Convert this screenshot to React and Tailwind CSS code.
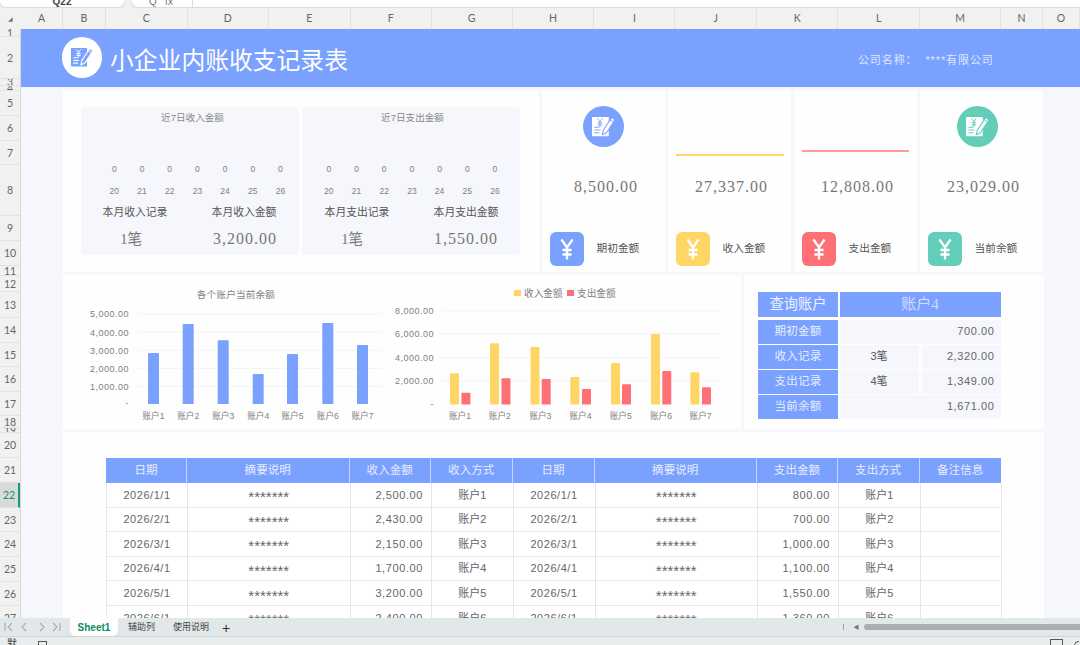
const COLS = [["A",42],["B",43],["C",82],["D",81],["E",82],["F",81],["G",81],["H",82],["I",81],["J",82],["K",81],["L",82],["M",81],["N",42],["O",37]];
const ROWS = [[1,8],[2,42],[3,7],[4,5],[5,25],[6,25],[7,24],[8,51],[9,25],[10,25],[11,10],[12,16],[13,26],[14,25],[15,24],[16,25],[17,24],[18,12],[19,5],[20,25],[21,25],[22,24.5],[23,24.5],[24,25],[25,24.5],[26,24.5],[27,24]];
const ENTRIES = [
  ["2026/1/1","2,500.00","账户1","800.00"],
  ["2026/2/1","2,430.00","账户2","700.00"],
  ["2026/3/1","2,150.00","账户3","1,000.00"],
  ["2026/4/1","1,700.00","账户4","1,100.00"],
  ["2026/5/1","3,200.00","账户5","1,550.00"],
  ["2026/6/1","2,400.00","账户6","1,360.00"],
];
const HEAD = ["日期","摘要说明","收入金额","收入方式","日期","摘要说明","支出金额","支出方式","备注信息"];
const CHART1 = [[147,353],[181.7,324],[216.7,340.3],[251.7,374],[286,354],[321.3,323],[356,345]];
const CHART2 = [[449,373.3,460.4,392.7],[489,343.3,500.5,378.3],[529.5,347,540.7,379],[569.3,377,581,389],[610,363,621,384.3],[650,334,661.3,371],[689.4,372.3,701,387.3]];
const LABEL2 = [459,498.8,539.4,579.5,619.7,660,699.6];

function NoteIcon({ fg, bg, size = 26 }) {
  return (
    <svg width={size} height={size * 0.84} viewBox="0 0 25 21" fill="none">
      <path d="M1.6 1h15.6a.6.6 0 0 1 .6.6v18a.6.6 0 0 1-.6.6H1.6a.6.6 0 0 1-.6-.6v-18a.6.6 0 0 1 .6-.6z" fill={fg} />
      <path d="M6.5 2.5l2.4 3 2.4-3M8.9 5.5v5.5M6.6 6.7h4.6M6.6 8.8h4.6" stroke={bg} strokeWidth="1" />
      <path d="M3.4 11.2h5M3.4 14h6M3.4 16.8h5" stroke={bg} strokeWidth="1.1" />
      <path d="M11.3 18.8l1-4.6L20.6 1.6l3.4 2.2-8.3 12.7z" fill={fg} stroke={bg} strokeWidth="1.1" strokeLinejoin="round" />
      <path d="M19.2 3.8l3.4 2.2" stroke={bg} strokeWidth="1" />
    </svg>
  );
}

function YenIcon() {
  return (
    <svg width="14" height="22" viewBox="0 0 14 22" fill="none" stroke="white" strokeWidth="2.3">
      <path d="M1.5 1.5L7 9.5l5.5-8M7 9.5V21.5M2.5 12h9M2.5 16.5h9" />
    </svg>
  );
}

const serif = "font-['Liberation_Serif','Noto_Sans_CJK_SC',serif]";

function MiniPanel({ title, a, b, c, pad, cols, titlePad, countPad, valuePad }) {
  return (
    <div className="w-[218px] h-[148px] shrink-0 bg-[#f5f7fc] rounded-sm flex flex-col">
      <div className={`mt-[5px] h-3 leading-3 text-center text-[9.6px] text-[#888888] ${titlePad}`}>{title}</div>
      <div className={`mt-[39px] h-3 leading-3 grid grid-cols-[repeat(7,27.7px)] text-center text-[8.5px] text-[#808080] ${pad}`}>
        {[0,0,0,0,0,0,0].map((v, i) => <span key={i}>{v}</span>)}
      </div>
      <div className={`mt-[10px] h-3 leading-3 grid grid-cols-[repeat(7,27.7px)] text-center text-[8.5px] text-[#808080] ${pad}`}>
        {[20,21,22,23,24,25,26].map((v) => <span key={v}>{v}</span>)}
      </div>
      <div className={`mt-[8px] h-[14px] leading-[14px] grid text-center text-[10.8px] text-[#555555] ${cols}`}>
        <span>{a}</span><span>{b}</span>
      </div>
      <div className={`mt-[10px] h-5 leading-5 grid text-center text-[#777777] ${cols} ${serif}`}>
        <span className={`text-[14.5px] ${countPad}`}>1笔</span>
        <span className={`text-[16px] tracking-[1px] ${valuePad}`}>{c}</span>
      </div>
    </div>
  );
}

function Card({ top, value, color, label, pad }) {
  return (
    <div className="w-[123px] shrink-0 bg-[#fefefe] flex flex-col">
      <div className="h-[74px]">{top}</div>
      <div className={`h-[46px] leading-[46px] text-center text-[16px] tracking-[1px] text-[#777777] ${pad} ${serif}`}>{value}</div>
      <div className="mt-[22px] pl-[7.5px] flex items-center gap-[13px]">
        <div className={`w-[34px] h-[34px] rounded-md flex items-center justify-center ${color}`}><YenIcon /></div>
        <span className="text-[10.7px] text-[#555555] -mt-[2px]">{label}</span>
      </div>
    </div>
  );
}

function Circle({ color, fg, ml = "ml-[41px]" }) {
  return (
    <div className={`mt-[16px] ${ml} w-[41px] h-[41px] rounded-full flex items-center justify-center ${color}`}>
      <NoteIcon fg="#ffffff" bg={fg} size={25} />
    </div>
  );
}

const axisStyle = { fontSize: 9, fill: "#808080", letterSpacing: 0.5 };
const catStyle = { fontSize: 8.6, fill: "#808080", textAnchor: "middle" };

function Chart1() {
  const ticks = [["5,000.00",314],["4,000.00",332.3],["3,000.00",350.3],["2,000.00",368.3],["1,000.00",386.3]];
  return (
    <svg className="shrink-0" width="328" height="154" viewBox="62 275 328 154">
      <text x="235" y="297.5" textAnchor="middle" style={{ fontSize: 9.6, fill: "#808080", letterSpacing: 0.2 }}>各个账户当前余额</text>
      {ticks.map(([t, y]) => (
        <g key={t}>
          <line x1="137" x2="381" y1={y} y2={y} stroke="#f3f3f3" />
          <text x="128" y={y + 3.2} textAnchor="end" style={axisStyle}>{t}</text>
        </g>
      ))}
      <text x="128" y="406" textAnchor="end" style={axisStyle}>-</text>
      {CHART1.map(([x, top], i) => (
        <g key={i}>
          <path d={`M${x} 404V${top + 1}a1 1 0 0 1 1-1h9a1 1 0 0 1 1 1V404z`} fill="#7ba1ff" />
          <text x={x + 5.5} y="419" style={catStyle}>账户{i + 1}</text>
        </g>
      ))}
    </svg>
  );
}

function Chart2() {
  const ticks = [["8,000.00",310.7],["6,000.00",333.7],["4,000.00",357.7],["2,000.00",381]];
  return (
    <svg className="shrink-0" width="350" height="154" viewBox="390 275 350 154">
      <rect x="513" y="290" width="7" height="6" fill="#ffd666" />
      <text x="523" y="296.5" style={{ fontSize: 9.7, fill: "#808080" }}>收入金额</text>
      <rect x="566" y="290" width="7" height="6" fill="#ff7076" />
      <text x="576" y="296.5" style={{ fontSize: 9.7, fill: "#808080" }}>支出金额</text>
      {ticks.map(([t, y]) => (
        <g key={t}>
          <line x1="440" x2="721" y1={y} y2={y} stroke="#f3f3f3" />
          <text x="433" y={y + 3.2} textAnchor="end" style={axisStyle}>{t}</text>
        </g>
      ))}
      <text x="433" y="406.5" textAnchor="end" style={axisStyle}>-</text>
      {CHART2.map(([x1, t1, x2, t2], i) => (
        <g key={i}>
          <path d={`M${x1} 404.5V${t1 + 1}a1 1 0 0 1 1-1h7a1 1 0 0 1 1 1V404.5z`} fill="#ffd666" />
          <path d={`M${x2} 404.5V${t2 + 1}a1 1 0 0 1 1-1h7a1 1 0 0 1 1 1V404.5z`} fill="#ff7076" />
          <text x={LABEL2[i]} y="419" style={catStyle}>账户{i + 1}</text>
        </g>
      ))}
    </svg>
  );
}

function QueryRow({ label, children, h = "h-[24px]" }) {
  return (
    <div className={`flex gap-[1.5px] ${h}`}>
      <div className="w-[80px] bg-[#7ba1ff] flex items-center justify-center text-[11.5px] tracking-[0.3px] text-[#e7edff]">{label}</div>
      {children}
    </div>
  );
}

const num = "text-[11px] tracking-[0.6px] text-[#666666]";

function QueryPanel() {
  return (
    <div className="w-[300px] shrink-0 bg-[#fefefe] pt-[17px] pl-[14px] flex flex-col gap-[1px]">
      <div className="flex gap-[1.5px] h-[25px] mb-[1.5px]">
        <div className="w-[80px] bg-[#7ba1ff] flex items-center justify-center text-[14.3px] text-[#eef2ff]">查询账户</div>
        <div className={`w-[161px] bg-[#7ba1ff] flex items-center justify-center text-[15px] text-[#cfdcff] ${serif}`}>账户4</div>
      </div>
      <QueryRow label="期初金额">
        <div className={`w-[161px] bg-[#f5f7fc] pr-[6px] flex items-center justify-end ${num}`}>700.00</div>
      </QueryRow>
      <QueryRow label="收入记录">
        <div className="w-[79px] bg-[#f5f7fc] flex items-center justify-center text-[11px] text-[#555555]">3笔</div>
        <div className={`w-[79px] ml-[1.5px] bg-[#f5f7fc] pr-[6px] flex items-center justify-end ${num}`}>2,320.00</div>
      </QueryRow>
      <QueryRow label="支出记录">
        <div className="w-[79px] bg-[#f5f7fc] flex items-center justify-center text-[11px] text-[#555555]">4笔</div>
        <div className={`w-[79px] ml-[1.5px] bg-[#f5f7fc] pr-[6px] flex items-center justify-end ${num}`}>1,349.00</div>
      </QueryRow>
      <QueryRow label="当前余额">
        <div className={`w-[161px] bg-[#f5f7fc] pr-[6px] flex items-center justify-end ${num}`}>1,671.00</div>
      </QueryRow>
    </div>
  );
}

const tableCols = "grid grid-cols-[81px_162.5px_81.5px_81.5px_82px_162.5px_81px_81.5px_81.5px]";

function EntryTable() {
  return (
    <div className="w-[895px]">
      <div className={`${tableCols} h-[25px] bg-[#7ba1ff]`}>
        {HEAD.map((h, i) => (
          <div key={i} className={`flex items-center justify-center text-[11.5px] tracking-[0.1px] text-[#e7edff] ${i < 8 ? "border-r border-[#c4d4ff]" : ""}`}>{h}</div>
        ))}
      </div>
      {ENTRIES.map((r, i) => {
        const cell = "flex items-center border-r border-[#e6e6e6] text-[#666666]";
        const center = `${cell} justify-center`;
        const date = `${center} text-[11px] tracking-[0.55px]`;
        const stars = `${center} text-[15px] leading-none pt-[4px] text-[#555555]`;
        const amount = `${cell} justify-end pr-[8px] text-[11px] tracking-[0.6px]`;
        const acct = `${center} text-[11px]`;
        return (
          <div key={i} className={`${tableCols} h-[24.6px] border-b border-[#e6e6e6] border-l bg-white`}>
            <div className={date}>{r[0]}</div>
            <div className={stars}>*******</div>
            <div className={amount}>{r[1]}</div>
            <div className={acct}>{r[2]}</div>
            <div className={date}>{r[0]}</div>
            <div className={stars}>*******</div>
            <div className={amount}>{r[3]}</div>
            <div className={acct}>{r[2]}</div>
            <div className={cell}></div>
          </div>
        );
      })}
    </div>
  );
}

export default function App() {
  return (
    <div className="w-[1080px] h-[645px] overflow-hidden flex flex-col bg-[#f1f1ef] font-['Liberation_Sans','Noto_Sans_CJK_SC',sans-serif]">
      {/* formula bar */}
      <div className="h-[8px] shrink-0 flex gap-[8px] overflow-hidden">
        <div className="w-[124px] h-[7px] bg-white rounded-b-md shadow-sm flex items-end justify-center overflow-hidden">
          <span className="text-[10px] leading-[10px] text-[#444444] font-bold">Q22</span>
        </div>
        <div className="flex-1 h-[7px] bg-white rounded-bl-md shadow-sm flex items-end pl-[17px] overflow-hidden">
          <span className="text-[10px] leading-[10px] text-[#777777] w-[43px]">Q&nbsp;&nbsp;&nbsp;fx</span>
          <span className="w-px h-full bg-[#dddddd]"></span>
        </div>
      </div>
      {/* column headings */}
      <div className="h-[21px] shrink-0 flex bg-[#f1f1ef] font-['Lato',sans-serif] text-[10.5px] text-[#666666]">
        <div className="w-[21px] flex items-center justify-center text-[6px] text-[#777777]">◢</div>
        {COLS.map(([c, w]) => (
          <div key={c} style={{ width: w }} className="flex items-center justify-center border-r border-[#e2e2e0]">{c}</div>
        ))}
      </div>
      {/* sheet */}
      <div className="flex-1 min-h-0 flex overflow-hidden">
        <div className="w-[21px] shrink-0 border-r border-[#d9d9d9] font-['Lato',sans-serif] text-[10.5px] text-[#666666]">
          {ROWS.map(([n, h]) => (
            <div key={n} style={{ height: h, lineHeight: `${h}px` }} className={`overflow-hidden text-center border-b border-[#e2e2e0] ${n === 22 ? "bg-[#d9dbda] text-[#1a8f6c] border-r-2 border-r-[#1a9b75]" : ""}`}>{n}</div>
          ))}
        </div>
        <div className="flex-1 min-w-0 bg-[#f5f7fd] flex flex-col overflow-hidden">
          {/* title band */}
          <div className="h-[58px] shrink-0 bg-[#7ba1ff] flex items-center pl-[41px]">
            <div className="w-[40px] h-[41px] -mt-[2px] rounded-full bg-white flex items-center justify-center">
              <NoteIcon fg="#7ba1ff" bg="#ffffff" size={24} />
            </div>
            <span className="ml-[8px] mt-[5px] text-[23.8px] text-white">小企业内账收支记录表</span>
            <span className="ml-[510px] mt-[4px] text-[11px] tracking-[0.9px] text-[#dfe8ff]">公司名称：&nbsp;&nbsp;****有限公司</span>
          </div>
          {/* top row */}
          <div className="mt-[3px] h-[182px] shrink-0 flex pl-[42px] gap-[3px]">
            <div className="w-[476px] shrink-0 bg-[#fefefe] pt-[17px] pl-[18px] flex gap-[3px]">
              <MiniPanel title="近7日收入金额" a="本月收入记录" b="本月收入金额" c="3,200.00" pad="pl-[19.5px]" cols="grid-cols-[108px_110px]" titlePad="pl-[5px]" countPad="pr-[8px]" valuePad="pl-[2px]" />
              <MiniPanel title="近7日支出金额" a="本月支出记录" b="本月支出金额" c="1,550.00" pad="pl-[13px]" cols="grid-cols-[110px_108px]" titlePad="pl-[3px]" countPad="pr-[10px]" valuePad="pl-0" />
            </div>
            <Card top={<Circle color="bg-[#7ba1ff]" fg="#7ba1ff" />} value="8,500.00" color="bg-[#7ba1ff]" label="期初金额" pad="pl-[5px]" />
            <Card top={<div className="mt-[64px] ml-[8px] w-[108px] h-[2px] bg-[#ffd666]"></div>} value="27,337.00" color="bg-[#ffd666]" label="收入金额" pad="pl-[4px]" />
            <Card top={<div className="mt-[60px] ml-[8px] w-[107px] h-[2px] bg-[#ff9aa0]"></div>} value="12,808.00" color="bg-[#ff7076]" label="支出金额" pad="pl-[4px]" />
            <Card top={<Circle color="bg-[#62cdb9]" fg="#62cdb9" ml="ml-[37px]" />} value="23,029.00" color="bg-[#65ceba]" label="当前余额" pad="pl-[4px]" />
          </div>
          {/* charts row */}
          <div className="mt-[3px] h-[154px] shrink-0 flex pl-[42px] gap-[3px]">
            <div className="w-[678px] shrink-0 bg-[#fefefe] flex">
              <Chart1 />
              <Chart2 />
            </div>
            <QueryPanel />
          </div>
          {/* table row */}
          <div className="mt-[3px] flex-1 min-h-0 ml-[42px] w-[981px] bg-[#fefefe] pt-[26px] pl-[43px] overflow-hidden">
            <EntryTable />
          </div>
        </div>
      </div>
      {/* sheet tabs */}
      <div className="h-[19px] shrink-0 bg-[#e2e8ea] flex items-center border-b border-[#cfd5d7]">
        <div className="w-[70px] pl-[4px] flex items-center text-[#a5abae]">
          <svg width="58" height="10" viewBox="0 0 58 10" fill="none" stroke="currentColor" strokeWidth="1.1">
            <path d="M1 1v8M8 1L4 5l4 4M22 1l-4 4 4 4M36 1l4 4-4 4M49 1l4 4-4 4M56 1v8" />
          </svg>
        </div>
        <div className="w-[48px] h-full bg-white rounded-b-md flex items-center justify-center pt-[1px] text-[10px] font-bold text-[#0f8a5f]">Sheet1</div>
        <span className="ml-[10px] mt-[2px] text-[9px] text-[#444444]">辅助列</span>
        <span className="ml-[18px] mt-[2px] text-[9px] text-[#444444]">使用说明</span>
        <span className="ml-[13px] mt-[2px] text-[14px] leading-[14px] text-[#333333]">+</span>
        <span className="ml-[613px] w-px h-[6px] bg-[#9aa0a3]"></span>
        <span className="ml-[9px] text-[6px] text-[#777777]">◀</span>
        <div className="ml-[5px] flex-1 h-[6px] rounded-l-full bg-[#a9aeb2]"></div>
      </div>
      {/* status bar */}
      <div className="h-[8px] shrink-0 bg-[#e9edee] flex overflow-hidden pl-[7px] text-[#444444]">
        <span className="text-[10px] leading-[10px] mt-[2px]">默</span>
        <span className="ml-[21px] mt-[4px] w-[9px] h-[9px] border border-[#555555]"></span>
        <span className="ml-auto mt-[2px] w-[13px] h-[12px] border border-[#555555] border-b-0"></span>
        <span className="ml-[11px] mr-[1px] mt-[4px] w-[5px] h-[9px] border-l border-t border-[#555555] rounded-tl-full"></span>
      </div>
    </div>
  );
}
